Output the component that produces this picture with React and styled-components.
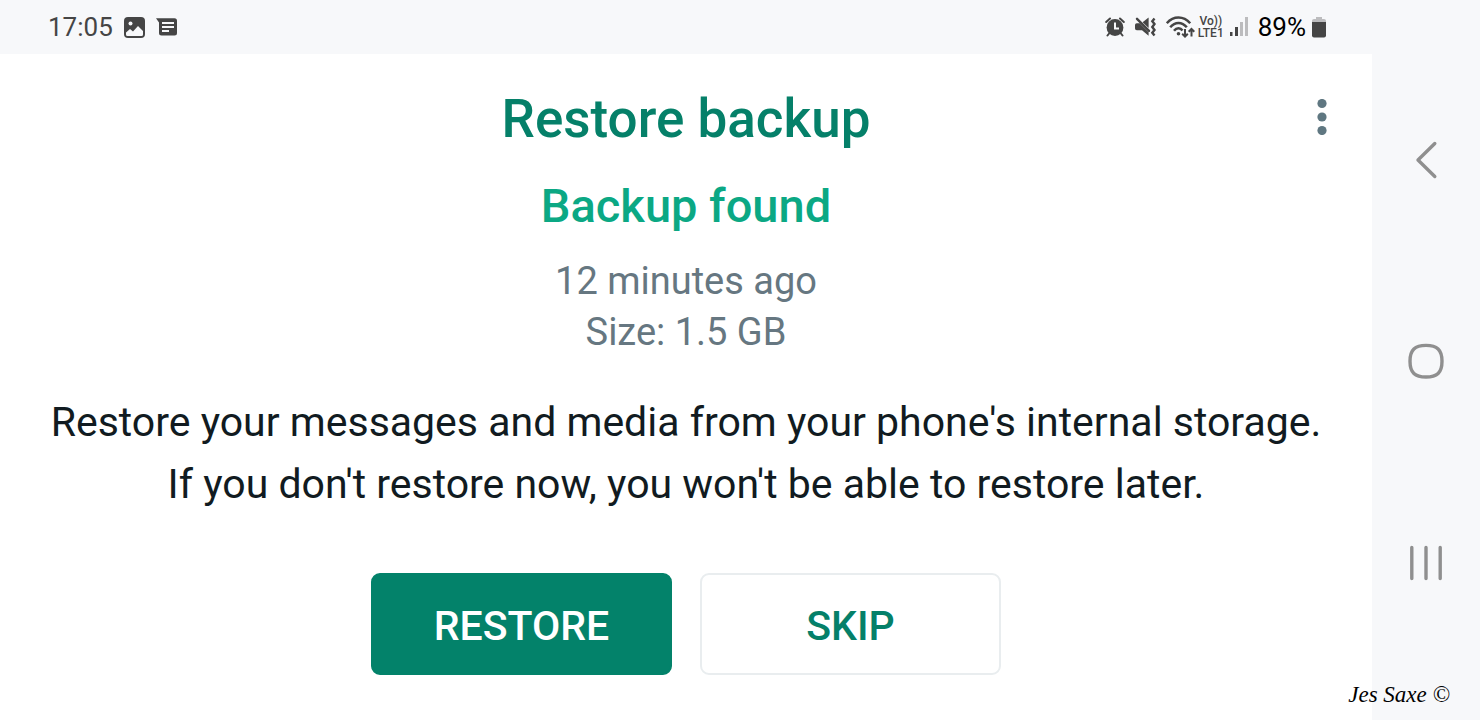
import styled, { createGlobalStyle } from "styled-components";

const App = () => {
  return (
    <>
      <GlobalStyle />
      <Screen>
        <StatusBar>
          <StatusGroup $gap={11}>
            <Clock>17:05</Clock>
            <PictureIcon />
            <MessageIcon />
          </StatusGroup>
          <StatusGroup $gap={6}>
            <StatusGroup $gap={10}>
              <AlarmIcon />
              <MuteIcon />
              <WifiIcon />
            </StatusGroup>
            <Network>
              <span>Vo))</span>
              <span>LTE1</span>
            </Network>
            <SignalIcon />
            <Battery>89%</Battery>
            <BatteryIcon />
          </StatusGroup>
        </StatusBar>

        <Content>
          <TitleRow>
            <Title>Restore backup</Title>
            <MenuButton type="button" aria-label="More options">
              <svg width="10" height="36" viewBox="0 0 10 36" fill="#5f7781">
                <circle cx="5" cy="4.5" r="4.6" />
                <circle cx="5" cy="18" r="4.6" />
                <circle cx="5" cy="31.5" r="4.6" />
              </svg>
            </MenuButton>
          </TitleRow>
          <Subtitle>Backup found</Subtitle>
          <Details>
            <p>12 minutes ago</p>
            <p>Size: 1.5 GB</p>
          </Details>
          <Message>
            Restore your messages and media from your phone's internal storage.
            <br />
            If you don't restore now, you won't be able to restore later.
          </Message>
          <Actions>
            <ActionButton type="button" $primary>
              RESTORE
            </ActionButton>
            <ActionButton type="button">SKIP</ActionButton>
          </Actions>
        </Content>

        <SystemNav>
          <NavButton type="button" aria-label="Back">
            <svg width="40" height="40" viewBox="0 0 40 40">
              <path d="M28.8 3.5L12 20L28.8 36.5" />
            </svg>
          </NavButton>
          <NavButton type="button" aria-label="Home">
            <svg width="40" height="40" viewBox="0 0 40 40">
              <path d="M20 3.4C31 3.4 36 7.6 36 19.2S31 35 20 35S4 30.8 4 19.2S9 3.4 20 3.4Z" />
            </svg>
          </NavButton>
          <NavButton type="button" aria-label="Recent apps">
            <svg width="40" height="40" viewBox="0 0 40 40">
              <path d="M5.8 4.5V35.5M20 4.5V35.5M34.2 4.5V35.5" />
            </svg>
          </NavButton>
        </SystemNav>
        <Signature>Jes Saxe ©</Signature>
      </Screen>
    </>
  );
};

const PictureIcon = () => (
  <svg width="21" height="21" viewBox="0 0 21 21">
    <rect width="21" height="21" rx="4" fill="#454545" />
    <circle cx="6.5" cy="6.5" r="2" fill="#f7f8fa" />
    <path
      d="M2 15.5L6 12L9 14.5L14 9L19 14V17.5Q19 19 17.5 19H3.5Q2 19 2 17.5Z"
      fill="#f7f8fa"
    />
  </svg>
);

const MessageIcon = () => (
  <svg width="21" height="18" viewBox="0 0 21 18">
    <path
      d="M0 .3H18.5Q21 .3 21 2.8V15Q21 17.5 18.5 17.5H5.5Q3 17.5 3 15V4.5Z"
      fill="#454545"
    />
    <path
      d="M6 5H18M6 9H18M6 13H13"
      stroke="#f7f8fa"
      strokeWidth="1.8"
    />
  </svg>
);

const AlarmIcon = () => (
  <svg width="20" height="20" viewBox="0 0 20 20">
    <circle cx="10" cy="10.5" r="8.4" fill="#454545" />
    <path
      d="M1.2 5L5 1.5M18.8 5L15 1.5M4.5 16L2.5 18.5M15.5 16L17.5 18.5"
      stroke="#454545"
      strokeWidth="2"
      strokeLinecap="round"
    />
    <path
      d="M10 5.5V11.500H14"
      fill="none"
      stroke="#f7f8fa"
      strokeWidth="2"
    />
  </svg>
);

const MuteIcon = () => (
  <svg width="21" height="20" viewBox="0 0 21 20">
    <path
      d="M1.8 6.300H4.700L13.600 15.200V18.800L7 13.300H1.800Q0 13.300 0 11.500V8Q0 6.300 1.800 6.300Z"
      fill="#454545"
    />
    <path d="M7.6 5.200L13.600 .5V11Z" fill="#454545" />
    <path
      d="M2 1.800L14 13.800"
      stroke="#454545"
      strokeWidth="2.4"
      strokeLinecap="round"
    />
    <path
      d="M19.500 1.500L17.300 4.300L19.500 7.100L17.300 10L19.500 12.900L17.300 15.700L19.500 18.500"
      fill="none"
      stroke="#454545"
      strokeWidth="2.4"
    />
  </svg>
);

const WifiIcon = () => (
  <svg width="29" height="22" viewBox="0 0 29 22">
    <g fill="none" stroke="#454545" strokeWidth="2.500">
      <path d="M.8 7.200Q5.800 1.500 12.500 1.500T24.200 7.200" />
      <path d="M4.200 11.300Q7.800 7 12.500 7T20.800 11.300" />
      <path d="M8 14.800Q10 12.300 12.500 12.300T16.500 14.400" />
      <path
        d="M19 13V20.500M16.200 17.800L19 20.600L21.800 17.800M25.500 20.500V13M22.700 15.700L25.500 12.900L28.300 15.700"
        strokeWidth="2"
      />
    </g>
    <circle cx="12.500" cy="17.800" r="1.800" fill="#454545" />
  </svg>
);

const SignalIcon = () => (
  <svg width="22" height="20" viewBox="0 0 22 20">
    <rect x="0" y="15" width="2.500" height="4" fill="#454545" />
    <rect x="5" y="10" width="3" height="9" fill="#454545" />
    <rect x="10" y="5" width="3" height="14" fill="#bcbcbe" />
    <rect x="15" y="0" width="3" height="19" fill="#bcbcbe" />
  </svg>
);

const BatteryIcon = () => (
  <svg width="14" height="21" viewBox="0 0 14 21">
    <path d="M4 0H10V2H12Q14 2 14 4V6H0V4Q0 2 2 2H4Z" fill="#bcbcbe" />
    <path d="M0 5H14V18.5Q14 20.5 12 20.5H2Q0 20.5 0 18.5Z" fill="#454545" />
  </svg>
);

const GlobalStyle = createGlobalStyle`
  * {
    box-sizing: border-box;
  }

  body {
    margin: 0;
    background: #ffffff;
    font-family: Roboto, "Liberation Sans", sans-serif;
  }

  h1, h2, p {
    margin: 0;
  }

  svg {
    display: block;
    flex-shrink: 0;
  }
`;

const Screen = styled.div`
  position: relative;
  display: grid;
  grid-template-columns: minmax(0, 1fr) 108px;
  grid-template-rows: auto 1fr;
  min-height: 100vh;
`;

const StatusBar = styled.header`
  display: flex;
  justify-content: space-between;
  align-items: center;
  height: 54px;
  padding: 0 46px 0 48px;
  background: #f7f8fa;
`;

const StatusGroup = styled.div`
  display: flex;
  align-items: center;
  gap: ${({ $gap }) => $gap}px;
`;

const Clock = styled.time`
  font-size: 26px;
  color: #454545;
`;

const Network = styled.div`
  display: flex;
  flex-direction: column;
  align-items: center;
  margin-left: -3px;
  font-size: 12px;
  font-weight: 500;
  line-height: 12px;
  color: #454545;
`;

const Battery = styled.span`
  font-size: 26px;
  color: #000000;
`;

const Content = styled.main`
  grid-column: 1;
  padding: 33px 40px 45px;
  text-align: center;
`;

const TitleRow = styled.div`
  display: grid;
  grid-template-columns: 1fr auto 1fr;
  align-items: start;
`;

const Title = styled.h1`
  grid-column: 2;
  font-size: 53px;
  font-weight: 500;
  line-height: 64px;
  color: #058069;
`;

const MenuButton = styled.button`
  justify-self: end;
  padding: 12px 5px;
  border: 0;
  background: none;
  cursor: pointer;
`;

const Subtitle = styled.h2`
  margin-top: 27px;
  font-size: 47px;
  font-weight: 500;
  line-height: 56px;
  color: #0ba884;
`;

const Details = styled.div`
  margin-top: 22px;
  font-size: 38px;
  line-height: 51px;
  color: #667781;
`;

const Message = styled.p`
  margin-top: 33px;
  font-size: 41px;
  line-height: 62px;
  color: #111b21;
`;

const Actions = styled.div`
  display: flex;
  justify-content: center;
  gap: 28px;
  margin-top: 58px;
`;

const ActionButton = styled.button`
  width: 301px;
  height: 102px;
  padding: 4px 0 0;
  border: 2px solid ${({ $primary }) => ($primary ? "#03826a" : "#e9edef")};
  border-radius: 9px;
  background: ${({ $primary }) => ($primary ? "#03826a" : "#ffffff")};
  color: ${({ $primary }) => ($primary ? "#ffffff" : "#058069")};
  font-family: inherit;
  font-size: 41px;
  font-weight: 500;
  cursor: pointer;
`;

const SystemNav = styled.nav`
  grid-column: 2;
  grid-row: 1 / 3;
  display: flex;
  flex-direction: column;
  justify-content: space-between;
  align-items: center;
  padding: 136px 0 133px;
  background: #f7f8fa;
`;

const NavButton = styled.button`
  padding: 4px;
  border: 0;
  background: none;
  cursor: pointer;

  path {
    fill: none;
    stroke: #8f8f8f;
    stroke-width: 3.4;
    stroke-linecap: round;
    stroke-linejoin: round;
  }
`;

const Signature = styled.small`
  position: absolute;
  right: 30px;
  bottom: 14px;
  font-family: "Liberation Serif", serif;
  font-size: 23px;
  font-style: italic;
  line-height: 22px;
  color: #000000;
`;

export default App;
